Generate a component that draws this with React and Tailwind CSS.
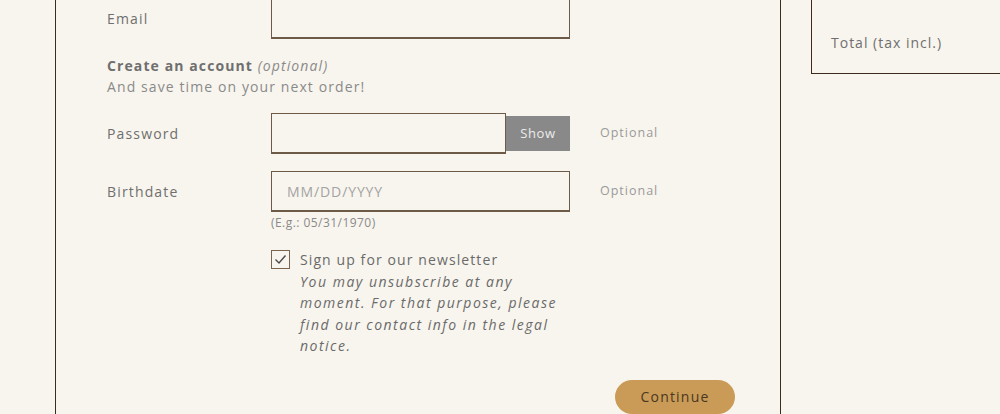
import React from "react";

const font = { fontFamily: '"Open Sans", "Liberation Sans", sans-serif' };

function Row({ label, children, extra }) {
  return (
    <div className="flex items-center">
      <div className="w-[164px] shrink-0 text-[14px] tracking-[1.15px] text-[#6f6f6f]">{label}</div>
      {children}
      {extra && (
        <div className="ml-[30px] text-[12.5px] tracking-[1px] text-[#9a9a9a]">{extra}</div>
      )}
    </div>
  );
}

export default function App() {
  return (
    <div className="h-[414px] w-[1000px] overflow-hidden bg-[#f8f5ee]" style={font}>
      <div className="flex h-full">
        <div className="w-[55px] shrink-0" />
        <div className="w-[726px] shrink-0 border-x border-[#3d2c1e] pl-[51px] pr-[45px]">
          <div className="-mt-[2px]">
            <Row label="Email">
              <div className="h-[41px] w-[299px] border border-[#6e5b47] border-b-2" />
            </Row>
            <div className="mt-[16px] text-[14px] leading-[21px] tracking-[1.1px] text-[#737373]">
              <div>
                <span className="font-bold text-[#6f6f6f]">Create an account</span>{" "}
                <span className="italic text-[#8a8a8a]">(optional)</span>
              </div>
              <div className="text-[#8a8a8a]">And save time on your next order!</div>
            </div>
            <div className="mt-[16px]">
              <Row label="Password" extra="Optional">
                <div className="flex h-[41px] w-[299px] items-center">
                  <div className="h-[41px] w-[235px] border border-[#6e5b47] border-b-2" />
                  <div className="flex h-[35px] w-[64px] items-center justify-center bg-[#898989] text-[13px] tracking-[0.6px] text-[#ececec]">
                    Show
                  </div>
                </div>
              </Row>
            </div>
            <div className="mt-[17px]">
              <Row label="Birthdate" extra="Optional">
                <div className="flex h-[41px] w-[299px] items-center border border-[#6e5b47] border-b-2 px-[15px] text-[14px] tracking-[0.9px] text-[#a3a3a3]">
                  MM/DD/YYYY
                </div>
              </Row>
            </div>
            <div className="ml-[164px] mt-[3px] text-[12px] leading-[16px] tracking-[0.45px] text-[#8a8a8a]">
              (E.g.: 05/31/1970)
            </div>
            <div className="ml-[164px] mt-[18px] flex">
              <div className="mt-[1px] flex h-[19px] w-[19px] shrink-0 items-center justify-center border border-[#7a6551]">
                <svg width="13" height="11" viewBox="0 0 13 11" fill="none">
                  <path d="M1.5 5.5 L5 9 L11.5 1.5" stroke="#4a4a4a" strokeWidth="1.4" />
                </svg>
              </div>
              <div className="ml-[10px] text-[14px] leading-[21.5px] tracking-[1.1px] text-[#6a6a6a]">
                <div>Sign up for our newsletter</div>
                <div className="italic tracking-[1.5px]">
                  You may unsubscribe at any
                  <br />
                  moment. For that purpose, please
                  <br />
                  find our contact info in the legal
                  <br />
                  notice.
                </div>
              </div>
            </div>
            <div className="mt-[23px] flex justify-end">
              <div className="flex h-[34px] w-[120px] items-center justify-center rounded-full bg-[#c99b57] text-[14px] tracking-[1.2px] text-[#4a3722]">
                Continue
              </div>
            </div>
          </div>
        </div>
        <div className="ml-[30px] h-[74px] flex-1 border-b border-l border-[#3d2c1e] pl-[19px] pt-[32px] text-[14px] tracking-[1px] text-[#6f6f6f]">
          Total (tax incl.)
        </div>
      </div>
    </div>
  );
}
